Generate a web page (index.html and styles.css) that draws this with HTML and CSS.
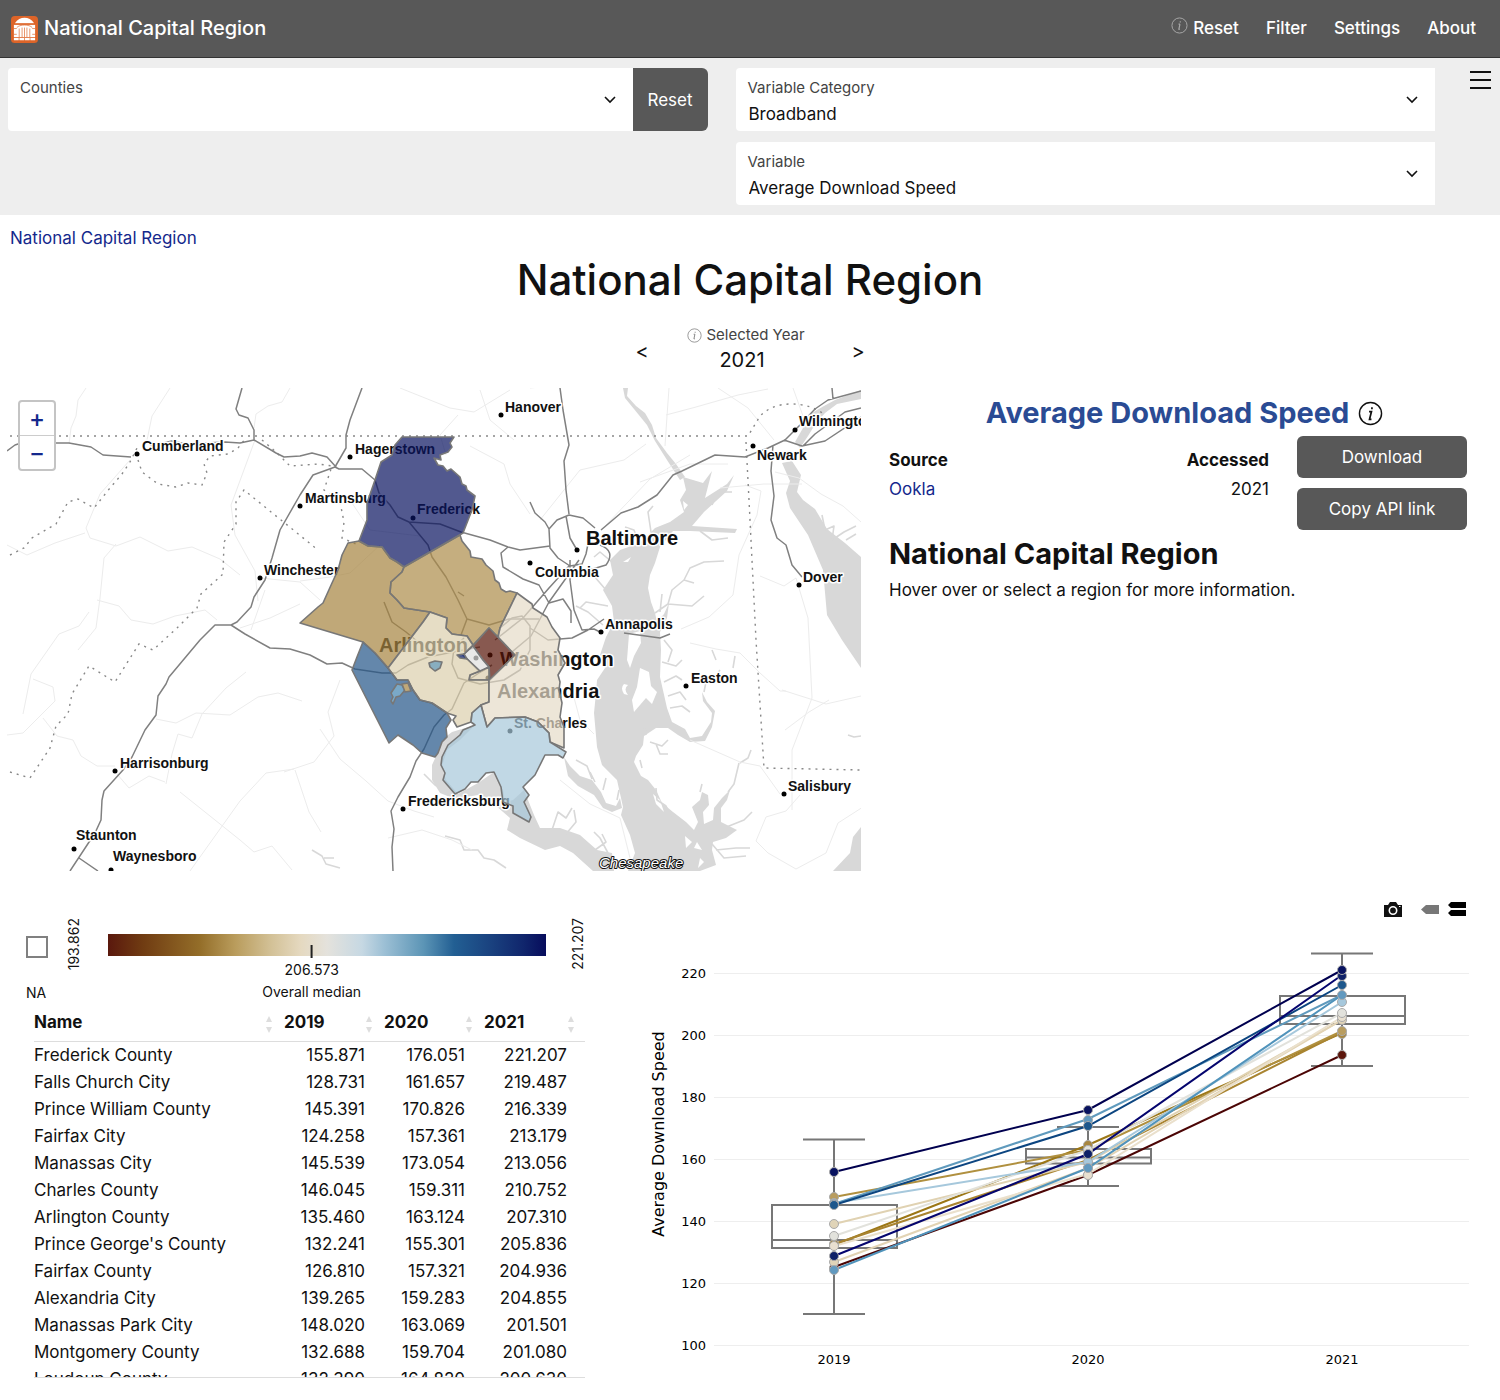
FILE: index.html
```
<!DOCTYPE html>
<html lang="en">
<head>
<meta charset="utf-8">
<meta name="viewport" content="width=device-width, initial-scale=1">
<title>National Capital Region</title>
<link rel="stylesheet" href="styles.css">
</head>
<body>
<nav class="navbar">
  <a class="brand" href="#">
    <svg class="brand-logo" viewBox="0 0 28 28" aria-hidden="true">
      <rect width="28" height="28" rx="4" fill="#dd6428"/>
      <path d="M4 7.500C9 0 19 0 24 7.500Z" fill="#fff"/>
      <path d="M3 9h22v13H3z" fill="#fff"/>
      <path d="M3 8.500h22" stroke="#dd6428" stroke-width="1"/>
      <path d="M6 12C9 8.500 19 8.500 22 12M8.500 13v9M11.500 12v10M14 12v10M16.500 12v10M19.500 13v9M3 13h3M22 13h3M3 19h3M22 19h3" fill="none" stroke="#dd6428" stroke-width=".7"/>
      <path d="M3 24h22" stroke="#fff" stroke-width="2.500" stroke-dasharray="5 .7"/>
    </svg>
    <span>National Capital Region</span>
  </a>
  <ul class="nav-links">
    <li><a href="#"><svg class="info-small" viewBox="0 0 18 18" aria-hidden="true"><circle cx="9" cy="9" r="8" fill="none" stroke="currentColor"/><path d="M9.800 4.500v1.200M9.500 7.500L8.300 13h1.200M8 7.500h1.500" fill="none" stroke="currentColor" stroke-width="1.200"/></svg>Reset</a></li>
    <li><a href="#">Filter</a></li>
    <li><a href="#">Settings</a></li>
    <li><a href="#">About</a></li>
  </ul>
</nav>

<section class="controls">
  <div class="control-grid">
    <div class="control-group">
      <div class="field">
        <label for="counties">Counties</label>
        <select id="counties"><option></option></select>
        <svg class="chevron" viewBox="0 0 12 8" aria-hidden="true"><path d="M1 1l5 5 5-5"/></svg>
      </div>
      <button class="field-reset" type="button">Reset</button>
    </div>
    <div class="control-stack">
      <div class="field">
        <label for="category">Variable Category</label>
        <select id="category"><option>Broadband</option></select>
        <svg class="chevron" viewBox="0 0 12 8" aria-hidden="true"><path d="M1 1l5 5 5-5"/></svg>
      </div>
      <div class="field">
        <label for="variable">Variable</label>
        <select id="variable"><option>Average Download Speed</option></select>
        <svg class="chevron" viewBox="0 0 12 8" aria-hidden="true"><path d="M1 1l5 5 5-5"/></svg>
      </div>
    </div>
  </div>
  <button class="menu-toggle" type="button" aria-label="Toggle menu">
    <svg viewBox="0 0 21 18" aria-hidden="true"><path d="M0 1h21M0 9h21M0 17h21"/></svg>
  </button>
</section>

<main>
  <a class="breadcrumb" href="#">National Capital Region</a>
  <h1>National Capital Region</h1>

  <div class="year-picker">
    <button type="button" aria-label="Previous year">&lt;</button>
    <div class="year-field">
      <label for="year"><svg class="info-small" viewBox="0 0 18 18" aria-hidden="true"><circle cx="9" cy="9" r="8" fill="none" stroke="currentColor"/><path d="M9.800 4.500v1.200M9.500 7.500L8.300 13h1.200M8 7.500h1.500" fill="none" stroke="currentColor" stroke-width="1.200"/></svg>Selected Year</label>
      <input id="year" type="text" value="2021">
    </div>
    <button type="button" aria-label="Next year">&gt;</button>
  </div>

  <div class="overview">
    <div class="map">
      <svg class="map-canvas" viewBox="7 388 854 483" role="img" aria-label="County map">
        <g class="water">
          <path d="M623 388L628 388L627 396L636 406L645 413L652 425L656 438L667 453L676 464L685 477L680 480L667 460L655 441L647 425L634 409L625 398Z"/>
          <path d="M683 477L703 483L712 471L705 498L727 484L734 475L727 491L704 512L692 526L737 529L735 533L690 531L673 531L660 547L655 563L650 575L648 588L651 602L655 613L657 622L664 614L669 603L667 618L660 632L661 650L660 677L667 708L672 722L685 729L690 738L702 736L711 722L712 713L703 701L702 692L707 702L715 711L712 727L705 741L690 742L678 735L668 728L656 728L644 736L643 745L636 756L634 762L641 776L648 780L656 790L662 803L673 812L686 822L694 830L698 822L692 807L700 800L702 792L708 795L709 805L703 812L704 824L713 820L714 808L722 798L730 790L727 800L721 808L721 822L737 830L726 838L713 842L712 850L716 865L700 871H628L635 853L630 835L621 815L623 807L617 780L602 765L597 747L594 713L596 693L597 680L605 668L600 655L606 637L614 622L612 606L603 590L613 575L610 560L620 550L640 543L655 528L670 522L684 512L680 500L686 490Z"/>
          <path d="M452 732L475 725L460 740L447 750L442 766L446 780L458 794L478 783L494 772L503 790L505 802L513 800L524 790L534 815L540 828L560 828L580 835L597 850L612 853L614 871H593L573 853L560 846L545 850L520 838L507 830L510 818L495 805L478 795L455 799L440 793L432 780L432 765L438 752L444 738Z"/>
          <path d="M564 757L570 766L580 776L592 780L601 792L606 803L616 806L620 798L622 808L612 812L603 808L594 795L578 786L568 776Z"/>
          <path d="M861 399L837 404L825 413L816 423L808 436L800 448L795 442L803 428L810 414L824 406L835 400L861 390Z"/>
          <path d="M782 463L792 461L801 475L797 492L803 500L815 509L827 529L845 543L861 557V668L842 640L827 615L823 570L808 535L790 508L786 493L790 481Z"/>
          <path d="M861 827L853 837L850 853L833 871H861Z"/>
        </g>
        <g class="islands">
          <path d="M629 634L640 631L641 643L634 656L630 668L627 660ZM640 668L649 672L651 686L657 692L652 704L646 698L634 712L632 700L637 687ZM624 684q-4 4 0 10l4 1q-5-6 0-10M623 562L631 557L628 562ZM683 501L688 505L684 510ZM653 794L660 800L664 812L656 804ZM697 842L702 850L694 848ZM685 836L692 842L686 848ZM700 858L704 862L698 868Z"/>
        </g>
        <g class="creeks">
          <path d="M655 613L668 604L672 590L684 580L694 583M684 580L690 568L704 562L724 561M668 604L692 606L704 596M660 612L662 594M651 532L648 512L653 506M640 546L634 530L625 527M628 545L612 532M612 562L600 552L594 557M606 590L594 576M608 606L586 602L580 608M603 625L588 612L576 606M719 492L732 492M716 496L712 505M700 531L712 540L728 538M664 640L672 650L668 662M662 662L676 666L682 660M664 682L676 676L682 680M668 696L680 692L686 700M670 708L682 706L690 712M704 692L706 682L716 676L720 670M716 660L712 650M735 656L733 668M646 735L644 724L656 718M650 742L662 746L668 740M656 744L660 754L668 754M640 760L642 768M739 763L734 784L728 792M751 750L748 758L740 763M724 828L744 820L752 812M716 850L736 848L750 848M712 844L724 858L746 856M656 788L657 800L666 806L672 818M700 792L702 784M592 779L587 766L576 760M603 790L606 778M595 782L590 772M617 800L619 790M552 830L558 812L566 818L572 808M566 834L576 822L574 810M595 850L606 842L602 834M608 853L600 838L594 832M445 836L460 840L464 850L478 850L484 858L494 860L506 868M312 850L322 856L326 864L340 868M324 858L334 858M424 774L436 786M822 515L825 530L834 526L832 540L844 532L856 526M846 540L856 534M848 735L854 737L861 736"/>
        </g>
        <g class="minor-roads">
          <path d="M86 388l-8 12-2 16-5 12-2 16M170 388l-18 28-5 24M290 388l-8 14-14 4-12 8-2 14M255 440l-24 65 4 30 20 36 3 30M130 460l-30 34-14 34 4 10 26 8 24-9 28 14 24-4 28 12 20 16M116 544l-12 14-4 40-4 30-18 22M7 545l20 10 28-12 30-10M97 600l22 6 12 14 22 4 22-8 30-6 12 10M7 735l16-2 20-20 12-12-2-14-20-8M23 714l8-40 28-40 20-8 10-14M43 718l14 18 16 4 8 16 16 10h18M156 719l20 4 20-10 34 2 28-18 20-4 24 8M165 782l-16-6-20 12-12-14M180 792l60 48 14 12 18-6 20 24M190 871l50-70 26-28 28-4M166 784l6-30 6-20 14 4 10-24 24-26 20-16M340 680l-12 32 6 24-20 26-30 10M295 770l14 42 12 20M320 729l20 30 26 22 22 20 26 10 20 6M388 838l34-8 30 10 20 10M400 388l30 12 20 8 24 4 36-22M458 415l-18 20 6 20M470 446l34 18 6 20 20 30M530 388l60-6M540 520l40-50 44-10 22-16M666 415l30-8 42-12 30-6M669 388l-2 28-2 30M718 388l30 20 26 32M793 388l10 28M690 455l-40 24-44 46M640 482l50-18 38 0M720 488l44-4 38 0M745 485l16 6-4 24-18 40-6 40-24 22-28 12M775 472l24 6 22 16 22 12 18 16M760 576l24 10 12-8 12 40 4 80-20 52 0 60M690 643l26 6 24 4 20 20 20 18h6M782 690l44 14 35-8M785 730l24-18 20-12M690 740l50 22 20 4 20 28M800 795l-14 16-20 6-10 24 12 12 28 16 30-16 12-30 25-16M560 780l30 24 30 14 10 40M480 390l10 30 24 20M572 690l8 30 14 14"/>
          <path d="M380 545l-30 28-20 4-30 4M350 500l20 30 50 6M260 578l40 4 20 18M265 590l-14 40M240 628l30-10 30-14"/>
        </g>
        <g class="borders">
          <path d="M10 436H748l12-20q12-12 31-12 20 0 34 11M746 442l3 58 7 140 8 128 97 2"/>
          <path d="M10 555l14-7 8-10 24-14 12-22 10-3 16 9 16-20 12-14 8-12 8-16M138 460l4 12 16 12 18 3 12-4 14 2 5-12-3-9 6-8 18-2 10-6 8-10M10 772l20 6 20-30 6-22 12-12 4-20 17-28 26 16 24-38 14 6 24-22 20-20 4-14 22-20 1-32 12-18 0-22 8-12 74 60M262 440l14 12 14 14 28-2 14 2-8 24 16 12 4 20-2 16 14 6"/>
        </g>
        <g class="major-roads">
          <path d="M7 451l8-6 6-2h48l22 4 12 8 28 2M150 446l22-5 14 3 39-2 15 1 14-3 22 13 8 4 16-1 12-3 15 4 9 10M242 388l-6 21 3 6 9 3 6 12v10"/>
          <path d="M362 388l-12 32-4 15v13l-11 19-22 8-13 20-20 35-8 28-7 22-11 17-3 10-14 15-6 3h-16l-15 15-31 37-3 7-8 12-2 19-11 15-13 27-9 13-19 21-2 9-1 20-6 13-25 38M79 858l19 13"/>
          <path d="M231 625l14 9 25 14 20 1 20 6 17 9 15-1 13 6 27 4h14l12-8 20-8 30-6 22-4M393 871l-1-24 2-18-3-18 7-14 12-20 6-16 8-12 10-22 10-12 8-6 12-26 18-12 10-6"/>
          <path d="M335 467l4 2h23l13 11 4 13 11 12 8 12 11 5 31 2 21 8 29 8 18 7 12 3 30-4M409 522l19 23 4 12 14 20 12 23 9 19 22 6 20-6 30 0"/>
          <path d="M384 602l8 20 14 10 12 10M467 619l-6 16M458 592l6 4M500 628l12-10 10-2 8 10 0 24-10 20-16 10-24 4-22-6-6-14 2-16 10-10"/>
          <path d="M560 388l3 22 6 35-5 16 2 29 3 24M530 502l5 11 10 9 4 7 8-9 12-5 14 3 12 10M549 529l1 19 8 10 12 8 12-2 4-10 3-15M566 516l4 22 7 12M508 547l-7 6 2 14 20 12 16 6 10 18 14-4 8 12v12M569 566l-20 22-26 30-28 22M579 560l-30 42-18 34-24 20M570 560l0 20 4 30 8 20 12-1 6 3M601 530l20-17 17-6 19-12 16-20 9-4 33-16 30 2 23-9 17-8 15-15 15-16 13-9 33-9M784 440l18 6 23-5 36-24M803 446l12-12 30-22 16-4M832 388l1 11M773 445l-2 26 3 25-3 24 6 18 9 7 6 20 10 12M530 628l18 12 24-2 16-8 16-11M624 633l36 5 10-4M600 545q16 6 6 20l-20 6"/>
        </g>
        <g class="town-dots">
          <circle cx="501" cy="415" r="2.500"/><circle cx="137" cy="454" r="2.500"/><circle cx="350" cy="457" r="2.500"/><circle cx="300" cy="506" r="2.500"/><circle cx="413" cy="518" r="2.500"/><circle cx="260" cy="578" r="2.500"/><circle cx="577" cy="550" r="2.500"/><circle cx="530" cy="563" r="2.500"/><circle cx="601" cy="632" r="2.500"/><circle cx="686" cy="686" r="2.500"/><circle cx="795" cy="430" r="2.500"/><circle cx="753" cy="446" r="2.500"/><circle cx="799" cy="585" r="2.500"/><circle cx="784" cy="794" r="2.500"/><circle cx="115" cy="771" r="2.500"/><circle cx="74" cy="849" r="2.500"/><circle cx="111" cy="870" r="2.500"/><circle cx="403" cy="809" r="2.500"/><circle cx="490" cy="655" r="2.500"/><circle cx="476" cy="658" r="2.500"/><circle cx="510" cy="731" r="2.500"/><circle cx="488" cy="678" r="2.500"/>
        </g>
        <g class="town-names">
          <text x="505" y="412">Hanover</text><text x="142" y="451">Cumberland</text><text x="355" y="454">Hagerstown</text><text x="305" y="503">Martinsburg</text><text x="417" y="514">Frederick</text><text x="264" y="575">Winchester</text><text x="535" y="577">Columbia</text><text x="605" y="629">Annapolis</text><text x="691" y="683">Easton</text><text x="799" y="426">Wilmington</text><text x="757" y="460">Newark</text><text x="803" y="582">Dover</text><text x="788" y="791">Salisbury</text><text x="120" y="768">Harrisonburg</text><text x="76" y="840">Staunton</text><text x="113" y="861">Waynesboro</text><text x="408" y="806">Fredericksburg</text><text x="514" y="728">St. Charles</text>
          <text class="city" x="586" y="545">Baltimore</text><text class="city" x="379" y="652">Arlington</text><text class="city" x="500" y="666">Washington</text><text class="city" x="497" y="698">Alexandria</text>
          <text class="bay" x="599" y="868">Chesapeake</text>
        </g>
        <g class="regions">
          <path fill="#08125f" d="M402 437L454 437L450 443L452 447L448 452L440 455L441 460L434 458L438 465L443 466L447 471L451 469L460 477L462 484L466 486L467 490L475 496L472 510L463 533L404 567L397 562L390 558L382 547L368 546L359 541L367 520L367 503L375 480L381 462L392 455L395 445Z"/>
          <path fill="#a5833e" d="M359 541L348 543L342 555L338 570L332 583L323 603L318 607L300 623L363 642L375 653L388 668L423 622L430 612L404 608L397 600L390 593L391 582L402 572L404 567L397 562L390 558L382 547L368 546Z"/>
          <path fill="#ac8c48" d="M404 567L460 535L462 541L470 551L471 557L482 559L486 565L493 571L495 580L499 583L501 589L506 592L510 591L517 593L500 628L498 637L489 628L473 645L467 636L459 635L452 634L446 628L447 618L430 612L404 608L397 600L390 593L391 582L402 572Z"/>
          <path fill="#551305" d="M489 628L515 655L490 680L489 667L483 660L473 646Z"/>
          <path fill="#e0e0de" d="M473 646L463 655L480 672L489 667L483 660Z"/>
          <path fill="#dccdab" d="M480 671L470 675L469 680L489 680L489 667Z"/>
          <path fill="#dccfac" d="M430 612L447 618L446 628L452 634L467 636L473 645L463 655L480 671L470 675L469 680L489 680V702L481 705L472 713L471 722L457 727L453 720L456 716L447 713L432 703L420 700L413 690L408 680L397 680L388 668L423 622Z"/>
          <path fill="#e5dbc8" d="M517 593L532 604L533 608L547 617L552 627L560 638L558 650L565 663L558 675L560 682L559 690L562 703L560 717L564 727V748L550 742L549 733L538 722L525 717L495 718L487 727L481 705L489 702V680L515 655L498 637L500 628Z"/>
          <path fill="#225488" d="M363 642L375 653L388 668L397 680L408 680L413 690L420 700L432 703L447 713L451 720L446 728L447 737L442 742L438 753L435 757L422 753L413 745L398 735L389 743L352 670L357 657Z"/>
          <path fill="#a6c8da" d="M481 705L487 727L495 718L525 717L538 722L549 733L550 742L566 752L563 758L558 755L545 755L535 775L523 787L529 795L524 802L531 817L529 822L513 813L513 806L503 802L501 787L494 772L486 773L478 782L471 782L465 789L455 794L443 780L445 773L441 765L442 757L448 745L460 735L463 730L475 725L471 722L472 713Z"/>
          <path fill="#5f9abd" d="M429 663l6-2 7 1-2 6-5 3-5-4z"/>
          <path class="solid" fill="#7aa9c8" d="M393 697l-2-4 6-9 5 1 3 5-5 6-4 1-3 7-2-3z"/>
          <path class="solid" fill="#c0a878" d="M402 684l6-1 3 8-6 1z"/>
          <path fill="#08207a" d="M457 655l7-1 3 5-7-1z"/>
        </g>
      </svg>
      <div class="zoom">
        <button type="button" aria-label="Zoom in">+</button>
        <button type="button" aria-label="Zoom out">−</button>
      </div>
    </div>

    <aside class="details">
      <h2 class="variable-name"><a href="#">Average Download Speed</a>
        <svg class="info-large" viewBox="0 0 26 26" aria-hidden="true"><circle cx="13" cy="13" r="11.500" fill="none" stroke="#111" stroke-width="1.500"/><path d="M14.500 6.500v2M11.500 11h2.500l-2 8h2" fill="none" stroke="#111" stroke-width="1.800"/></svg>
      </h2>
      <div class="source-row">
        <table class="source">
          <thead><tr><th>Source</th><th>Accessed</th></tr></thead>
          <tbody><tr><td><a href="#">Ookla</a></td><td>2021</td></tr></tbody>
        </table>
        <div class="source-actions">
          <button type="button">Download</button>
          <button type="button">Copy API link</button>
        </div>
      </div>
      <h3>National Capital Region</h3>
      <p>Hover over or select a region for more information.</p>
    </aside>
  </div>

  <div class="data">
    <section class="summary">
      <div class="legend">
        <div class="legend-na"><span class="swatch"></span><span>NA</span></div>
        <span class="legend-end">193.862</span>
        <div class="legend-scale">
          <div class="ramp"></div>
          <div class="median" style="left: 46.5%"><span class="tick"></span><span>206.573</span><span>Overall median</span></div>
        </div>
        <span class="legend-end legend-max">221.207</span>
      </div>
      <div class="table-scroll">
        <table class="values">
          <thead><tr>
            <th>Name<span class="sort"></span></th><th>2019<span class="sort"></span></th><th>2020<span class="sort"></span></th><th>2021<span class="sort"></span></th>
          </tr></thead>
          <tbody>
            <tr><td>Frederick County</td><td>155.871</td><td>176.051</td><td>221.207</td></tr>
            <tr><td>Falls Church City</td><td>128.731</td><td>161.657</td><td>219.487</td></tr>
            <tr><td>Prince William County</td><td>145.391</td><td>170.826</td><td>216.339</td></tr>
            <tr><td>Fairfax City</td><td>124.258</td><td>157.361</td><td>213.179</td></tr>
            <tr><td>Manassas City</td><td>145.539</td><td>173.054</td><td>213.056</td></tr>
            <tr><td>Charles County</td><td>146.045</td><td>159.311</td><td>210.752</td></tr>
            <tr><td>Arlington County</td><td>135.460</td><td>163.124</td><td>207.310</td></tr>
            <tr><td>Prince George's County</td><td>132.241</td><td>155.301</td><td>205.836</td></tr>
            <tr><td>Fairfax County</td><td>126.810</td><td>157.321</td><td>204.936</td></tr>
            <tr><td>Alexandria City</td><td>139.265</td><td>159.283</td><td>204.855</td></tr>
            <tr><td>Manassas Park City</td><td>148.020</td><td>163.069</td><td>201.501</td></tr>
            <tr><td>Montgomery County</td><td>132.688</td><td>159.704</td><td>201.080</td></tr>
            <tr><td>Loudoun County</td><td>132.390</td><td>164.820</td><td>200.630</td></tr>
          </tbody>
        </table>
      </div>
    </section>

    <section class="chart">
      <div class="chart-tools">
        <button type="button" aria-label="Download plot"><svg width="18" height="15" viewBox="0 0 18 15"><path d="M0 3h4l2-3h6l2 3h4v12H0z" fill="#111"/><circle cx="9" cy="8.500" r="3.700" fill="none" stroke="#fff" stroke-width="1.600"/><path d="M15 4.500h1.500" stroke="#fff"/></svg></button>
        <button class="tool-closest" type="button" aria-label="Show closest data"><svg width="18" height="9" viewBox="0 0 18 9"><path d="M0 4.500L5 0h13v9H5z" fill="#777"/></svg></button>
        <button type="button" aria-label="Compare data"><svg width="18" height="14" viewBox="0 0 18 14"><path d="M0 3l3-3h15v6H3zM0 11l3-3h15v6H3z" fill="#000"/></svg></button>
      </div>
      <svg class="plot" viewBox="585 920 915 460" role="img" aria-label="Average download speed by year">
        <path class="gridlines" d="M714 973.500H1469M714 1035.500H1469M714 1097.500H1469M714 1159.500H1469M714 1221.500H1469M714 1283.500H1469M714 1345.500H1469"/>
        <g class="boxes">
          <path d="M772 1205H897V1248H772ZM772 1240H897M834 1205V1139.500M834 1248V1314M803 1139.500H865M803 1314H865"/>
          <path d="M1026 1149H1151V1163.500H1026ZM1026 1157.500H1151M1088 1149V1127M1088 1163.500V1186M1057 1127H1119M1057 1186H1119"/>
          <path d="M1280 996H1405V1024H1280ZM1280 1016H1405M1342 996V953.500M1342 1024V1066M1311 953.500H1373M1311 1066H1373"/>
        </g>
        <g class="series">
          <polyline stroke="#4b0505" points="834,1267 1088,1175 1342,1055"/>
          <polyline stroke="#9c7716" points="834,1245 1088,1145 1342,1033"/>
          <polyline stroke="#a98430" points="834,1244 1088,1160 1342,1032"/>
          <polyline stroke="#b0903f" points="834,1197 1088,1150 1342,1031"/>
          <polyline stroke="#e0d2b2" points="834,1224 1088,1162 1342,1020"/>
          <polyline stroke="#e2d3b4" points="834,1262 1088,1168 1342,1020"/>
          <polyline stroke="#eae0cc" points="834,1246 1088,1174 1342,1017"/>
          <polyline stroke="#e2e2dc" points="834,1236 1088,1150 1342,1013"/>
          <polyline stroke="#a6c8dc" points="834,1203 1088,1162 1342,1002"/>
          <polyline stroke="#5f9abd" points="834,1204 1088,1119 1342,995"/>
          <polyline stroke="#5093bb" points="834,1270 1088,1168 1342,995"/>
          <polyline stroke="#0c4580" points="834,1205 1088,1126 1342,985"/>
          <polyline stroke="#05056e" points="834,1256 1088,1154 1342,975"/>
          <polyline stroke="#00004f" points="834,1172 1088,1110 1342,970"/>
        </g>
        <g class="points">
          <g fill="#5c160c"><circle cx="834" cy="1268" r="4.500"/><circle cx="1088" cy="1175" r="4.500"/><circle cx="1342" cy="1055" r="4.500"/></g>
          <g fill="#a88740"><circle cx="834" cy="1244" r="4.500"/><circle cx="1088" cy="1145" r="4.500"/><circle cx="1342" cy="1034" r="4.500"/></g>
          <g fill="#b99d5f"><circle cx="834" cy="1197" r="4.500"/><circle cx="1088" cy="1150" r="4.500"/><circle cx="1342" cy="1031" r="4.500"/></g>
          <g fill="#e0d4b8"><circle cx="834" cy="1224" r="4.500"/><circle cx="834" cy="1262" r="4.500"/><circle cx="1088" cy="1168" r="4.500"/><circle cx="1342" cy="1020" r="4.500"/></g>
          <g fill="#e9e0d0"><circle cx="834" cy="1246" r="4.500"/><circle cx="1088" cy="1175" r="4.500"/><circle cx="1342" cy="1017" r="4.500"/></g>
          <g fill="#e2e2dc"><circle cx="834" cy="1236" r="4.500"/><circle cx="1088" cy="1150" r="4.500"/><circle cx="1342" cy="1013" r="4.500"/></g>
          <g fill="#a6c8dc"><circle cx="834" cy="1203" r="4.500"/><circle cx="1088" cy="1162" r="4.500"/><circle cx="1342" cy="1002" r="4.500"/></g>
          <g fill="#6199bf"><circle cx="834" cy="1204" r="4.500"/><circle cx="1088" cy="1120" r="4.500"/><circle cx="1342" cy="995" r="4.500"/><circle cx="834" cy="1270" r="4.500"/><circle cx="1088" cy="1168" r="4.500"/></g>
          <g fill="#1d578c"><circle cx="834" cy="1205" r="4.500"/><circle cx="1088" cy="1126" r="4.500"/><circle cx="1342" cy="985" r="4.500"/></g>
          <g fill="#0f2168"><circle cx="834" cy="1256" r="4.500"/><circle cx="1088" cy="1154" r="4.500"/><circle cx="1342" cy="976" r="4.500"/></g>
          <g fill="#08125f"><circle cx="834" cy="1172" r="4.500"/><circle cx="1088" cy="1110" r="4.500"/><circle cx="1342" cy="970" r="4.500"/></g>
        </g>
        <g class="y-ticks">
          <text x="706" y="978">220</text><text x="706" y="1040">200</text><text x="706" y="1102">180</text><text x="706" y="1164">160</text><text x="706" y="1226">140</text><text x="706" y="1288">120</text><text x="706" y="1350">100</text>
        </g>
        <g class="x-ticks">
          <text x="834" y="1364">2019</text><text x="1088" y="1364">2020</text><text x="1342" y="1364">2021</text>
          <text class="axis-title" transform="translate(664 1134) rotate(-90)">Average Download Speed</text>
        </g>
      </svg>
    </section>
  </div>
</main>
</body>
</html>
```
FILE: styles.css
```
* { box-sizing: border-box; }
body {
  margin: 0;
  background: #fff;
  color: #111;
  font: 17px/26px Inter, "Liberation Sans", sans-serif;
}
a { color: #14288c; text-decoration: none; }
button, select, input { font: inherit; color: inherit; }
button { cursor: pointer; border: 0; padding: 0; background: none; }
h1, h2, h3, p, ul { margin: 0; padding: 0; }

.navbar {
  display: flex;
  justify-content: space-between;
  align-items: center;
  height: 58px;
  padding: 0 24px 2px 11px;
  background: #585858;
  border-bottom: 1px solid #333;
  font-weight: 500;
}
.navbar a { color: #fff; }
.brand { display: flex; align-items: center; gap: 6px; font-size: 20px; }
.brand-logo { width: 27px; height: 27px; margin-top: 3px; }
.nav-links { display: flex; gap: 27px; list-style: none; }
.nav-links .info-small { color: #aaa; }
.info-small { width: 17px; height: 17px; margin-right: 5px; }

.controls {
  display: flex;
  align-items: flex-start;
  gap: 35px;
  padding: 10px 9px 10px 8px;
  background: #eee;
}
.control-grid {
  flex: 1;
  display: grid;
  grid-template-columns: 1fr 1fr;
  align-items: start;
  gap: 28px;
}
.control-group { display: flex; }
.control-group .field { flex: 1; }
.control-stack { display: grid; gap: 11px; }
.field { position: relative; }
.field label {
  position: absolute;
  top: 8px;
  left: 12px;
  font-size: 15px;
  line-height: 24px;
  color: #444;
}
.field select {
  display: block;
  width: 100%;
  height: 63px;
  padding: 28px 40px 0 13px;
  border: 0;
  border-radius: 4px 0 0 4px;
  background: #fff;
  appearance: none;
}
.chevron { position: absolute; top: 28px; right: 17px; width: 12px; height: 8px; pointer-events: none; }
.chevron path { fill: none; stroke: #111; stroke-width: 1.6; }
.field-reset { width: 75px; border-radius: 0 6px 6px 0; background: #585858; color: #fff; }
.menu-toggle { height: 24px; line-height: 0; }
.menu-toggle svg { width: 21px; height: 18px; }
.menu-toggle path { stroke: #111; stroke-width: 2; }

main { padding: 0 0 20px; }
.breadcrumb { display: block; padding: 10px 10px 0; }
h1 { font-size: 42px; line-height: 58px; font-weight: 500; text-align: center; }

.year-picker {
  display: flex;
  justify-content: center;
  align-items: center;
  gap: 8px;
  height: 66px;
  margin-top: 9px;
}
.year-picker button { width: 32px; font-size: 20px; }
.year-field { width: 168px; padding-bottom: 4px; }
.year-field label {
  display: flex;
  justify-content: center;
  align-items: center;
  padding-right: 8px;
  font-size: 15px;
  line-height: 22px;
  color: #444;
}
.year-field .info-small { width: 15px; height: 15px; margin-right: 4px; color: #888; }
.year-field input {
  display: block;
  width: 100%;
  padding: 0 16px 0 0;
  border: 0;
  background: none;
  font-size: 20px;
  line-height: 28px;
  text-align: center;
}

.overview {
  display: grid;
  grid-template-columns: minmax(0, 854fr) minmax(0, 578fr);
  gap: 28px;
  padding: 4px 33px 0 7px;
}
.map { position: relative; }
.map-canvas { display: block; width: 100%; }
.water path { fill: #d8d8d8; }
.islands path { fill: #fff; }
.creeks path { fill: none; stroke: #d8d8d8; stroke-width: 1.6; stroke-linejoin: round; }
.minor-roads path { fill: none; stroke: #ececec; stroke-linejoin: round; }
.borders path { fill: none; stroke: #888; stroke-width: 1.4; stroke-dasharray: 2 5; }
.major-roads path { fill: none; stroke: #808080; stroke-width: 1.5; stroke-linejoin: round; }
.town-names {
  font: bold 14px "Liberation Sans", Arial, sans-serif;
  fill: #111;
  stroke: #fff;
  stroke-width: 3px;
  stroke-linejoin: round;
  paint-order: stroke;
}
.town-names .city { font-size: 20px; }
.town-names .bay { font: italic 15px "Liberation Sans", Arial, sans-serif; fill: #fff; stroke: #111; stroke-width: 2px; }
.regions path { fill-opacity: .7; stroke: #777; stroke-width: 1.6; stroke-linejoin: round; }
.regions .solid { fill-opacity: 1; }
.zoom {
  position: absolute;
  top: 12px;
  left: 11px;
  display: grid;
  width: 38px;
  border: 2px solid #c4c4c4;
  border-radius: 4px;
  background: #fff;
}
.zoom button { height: 33px; color: #14288c; font-size: 24px; font-weight: 500; line-height: 30px; }
.zoom button + button { height: 34px; border-top: 1px solid #ccc; }

.variable-name {
  display: flex;
  justify-content: center;
  align-items: center;
  gap: 9px;
  margin-top: 5px;
  padding-left: 13px;
  font-size: 29px;
  line-height: 40px;
  font-weight: 700;
}
.variable-name a { color: #2a4b94; }
.info-large { width: 25px; height: 25px; }
.source-row { display: flex; align-items: flex-start; gap: 28px; padding-top: 3px; }
.source { flex: 1; margin-top: 9px; border-collapse: collapse; }
.source th, .source td { height: 29px; padding: 0; text-align: left; }
.source th { font-weight: 700; }
.source th + th, .source td + td { text-align: right; }
.source-actions { display: grid; gap: 10px; width: 170px; }
.source-actions button { height: 42px; border-radius: 6px; background: #585858; color: #fff; }
.details h3 { margin-top: 8px; font-size: 29px; line-height: 32px; font-weight: 700; }
.details p { margin-top: 7px; }

.data {
  display: grid;
  grid-template-columns: minmax(0, 39fr) minmax(0, 61fr);
  margin-top: 29px;
}
.summary { padding-top: 17px; }
.legend {
  display: flex;
  align-items: flex-start;
  height: 87px;
  padding-left: 26px;
  font-size: 14px;
  line-height: 22px;
}
.legend-na { display: grid; gap: 24px; width: 37px; padding-top: 19px; }
.swatch { width: 22px; height: 22px; border: 2px solid #808080; }
.legend-end { width: 22px; height: 54px; writing-mode: sideways-lr; text-align: center; }
.legend-max { width: 14px; line-height: 14px; }
.legend-scale { position: relative; flex: 1; margin: 17px 25px 0 23px; }
.ramp {
  height: 22px;
  background: linear-gradient(to right, #5a180d 0%, #703c12 8%, #946e29 21%, #b99c5c 29%, #d2c095 37%, #e5d9c0 44%, #e4e2dc 50%, #c6d8e3 58%, #9dc0d5 63%, #5c95b6 72%, #225f93 79%, #1a4380 87%, #10256c 95%, #070c5c 100%);
}
.median {
  position: absolute;
  top: 11px;
  display: grid;
  justify-items: center;
  transform: translateX(-50%);
  white-space: nowrap;
}
.tick { width: 2px; height: 13px; margin-bottom: 1px; background: #222; }
.table-scroll { height: 374px; margin-left: 34px; overflow-y: auto; scrollbar-width: none; border-bottom: 1px solid #ddd; }
.values { width: 100%; border-collapse: collapse; table-layout: fixed; }
.values th { position: relative; height: 37px; padding: 0 0 0 9px; text-align: left; font-weight: 700; border-bottom: 1px solid #ddd; }
.values th:first-child { width: 241px; padding-left: 0; }
.values th:nth-child(2), .values th:nth-child(3) { width: 100px; }
.values td { height: 27px; padding: 0 10px 0 0; text-align: right; white-space: nowrap; }
.values td:first-child { text-align: left; }
.values td:last-child { padding-right: 18px; }
.sort { position: absolute; right: 3px; top: 12px; display: grid; gap: 5px; }
.values th:last-child .sort { right: 11px; }
.sort::before, .sort::after { content: ""; border: 3px solid transparent; }
.sort::before { border-top: 0; border-bottom: 6px solid #ddd; }
.sort::after { border-bottom: 0; border-top: 6px solid #ddd; }

.chart-tools { display: flex; justify-content: flex-end; align-items: center; height: 18px; padding-right: 34px; gap: 9px; line-height: 0; }
.tool-closest { margin-left: 10px; }
.plot { display: block; width: 100%; margin-top: 2px; font: 13px "DejaVu Sans", Verdana, sans-serif; }
.gridlines { stroke: #eee; }
.boxes path { fill: none; stroke: #777; stroke-width: 2; }
.series polyline { fill: none; stroke-width: 2; }
.points circle { stroke: #aaa; stroke-width: 1; }
.y-ticks { text-anchor: end; }
.x-ticks { text-anchor: middle; }
.axis-title { font-size: 16px; }
```
